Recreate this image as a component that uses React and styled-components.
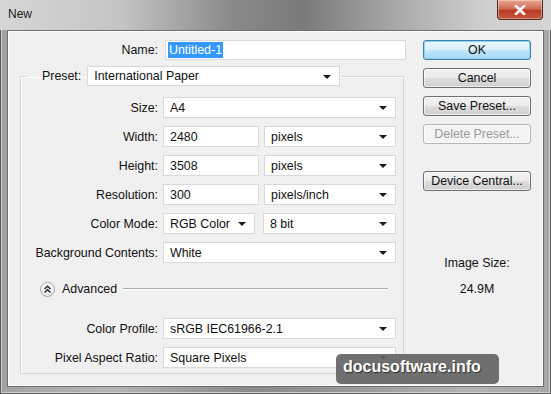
import React from "react";
import styled, { createGlobalStyle } from "styled-components";

const GlobalStyle = createGlobalStyle`
  html, body {
    margin: 0;
    padding: 0;
    overflow: hidden;
    background: #8f8f8f;
  }
`;

const Window = styled.div`
  position: relative;
  width: 551px;
  height: 394px;
  box-sizing: border-box;
  display: flex;
  flex-direction: column;
  padding: 0 7px 7px 7px;
  font-family: "Liberation Sans", Arial, sans-serif;
  font-size: 12.4px;
  color: #111;
  background: linear-gradient(
    90deg,
    #a2a2a2 0%,
    #b6b6b6 20%,
    #8a8a8a 45%,
    #979797 62%,
    #b3b3b3 85%,
    #a6a6a6 100%
  );
  box-shadow: inset 0 0 0 1px #5c5c5c, inset 0 0 0 2px #cfcfcf;
`;

const TitleBar = styled.div`
  height: 30px;
  display: flex;
  align-items: center;
  justify-content: space-between;
  margin: 0 -7px;
  padding: 0 8px 0 8px;
  background: linear-gradient(
    90deg,
    #d6d6d6 0%,
    #c4c4c4 22%,
    #8a8a8a 42%,
    #7a7a7a 55%,
    #a9a9a9 72%,
    #cfcfcf 88%,
    #d4d4d4 100%
  );
  box-sizing: border-box;
`;

const Title = styled.span`
  font-size: 12px;
  color: #1a1a1a;
  margin-top: -3px;
`;

const CloseButton = styled.div`
  align-self: flex-start;
  width: 46px;
  height: 20px;
  box-sizing: border-box;
  border: 1px solid #5a2a22;
  border-top: none;
  border-radius: 0 0 4px 4px;
  background: linear-gradient(180deg, #e8a493 0%, #d06e55 45%, #b93b22 55%, #c9573c 100%);
  box-shadow: inset 0 0 0 1px rgba(255, 255, 255, 0.35);
  display: flex;
  align-items: center;
  justify-content: center;
`;

const Panel = styled.div`
  flex: 1;
  display: flex;
  background: #f0f0f0;
  border: 1px solid #6d6d6d;
  box-shadow: inset 0 0 0 1px #fdfdfd;
  padding: 9px 11px 0 12px;
`;

const LeftColumn = styled.div`
  width: 386px;
  display: flex;
  flex-direction: column;
`;

const RightColumn = styled.div`
  width: 108px;
  margin-left: 17px;
  display: flex;
  flex-direction: column;
  align-items: stretch;
`;

const Row = styled.div`
  display: flex;
  align-items: center;
  height: ${(p) => p.$h || 21}px;
  gap: ${(p) => p.$gap || 5}px;
`;

const Label = styled.label`
  width: ${(p) => p.$w}px;
  text-align: right;
  white-space: nowrap;
  flex-shrink: 0;
`;

const TextBox = styled.div`
  width: ${(p) => p.$w}px;
  margin-left: ${(p) => p.$ml || 0}px;
  height: 100%;
  box-sizing: border-box;
  background: #fff;
  border: 1px solid #d9d9d9;
  display: flex;
  align-items: center;
  padding-left: ${(p) => p.$pad || 6}px;
  white-space: nowrap;
`;

const Selected = styled.span`
  background: #3399ff;
  color: #fff;
  padding: 1px 1px;
`;

const SelectBox = styled(TextBox)`
  justify-content: space-between;
  padding-right: 8px;
`;

const Arrow = styled.span`
  width: 0;
  height: 0;
  border-left: 4px solid transparent;
  border-right: 4px solid transparent;
  border-top: 4px solid #1b1b1b;
  margin-top: 1px;
`;

const GroupBox = styled.fieldset`
  margin: 6px 0 0 0;
  width: 384px;
  box-sizing: border-box;
  border: 1px solid #d5d5d5;
  box-shadow: inset 1px 1px 0 #fff;
  padding: 0 6px 5px 0;
  min-inline-size: 0;
`;

const Legend = styled.legend`
  margin-left: 6px;
  padding: 0 2px 0 15px;
  height: 20px;
  display: flex;
  align-items: center;
  gap: 6px;
`;

const Rows = styled.div`
  display: flex;
  flex-direction: column;
  gap: 8px;
  padding-top: ${(p) => p.$top || 0}px;
`;

const AdvancedRow = styled.div`
  display: flex;
  align-items: center;
  height: 16px;
  margin: 18px 0 21px 0;
  padding-left: 19px;
`;

const AdvancedIcon = styled.div`
  width: 15px;
  height: 15px;
  box-sizing: border-box;
  border-radius: 50%;
  border: 1px solid #a3a3a3;
  background: linear-gradient(180deg, #ffffff 0%, #e4e4e4 100%);
  display: flex;
  align-items: center;
  justify-content: center;
`;

const AdvancedText = styled.span`
  margin-left: 7px;
`;

const Rule = styled.div`
  flex: 1;
  height: 0;
  margin: 0 9px 0 6px;
  border-top: 1px solid #a9a9a9;
  border-bottom: 1px solid #fff;
`;

const Button = styled.div`
  height: 20px;
  box-sizing: border-box;
  border-radius: 3px;
  display: flex;
  align-items: center;
  justify-content: center;
  margin-top: ${(p) => p.$mt || 0}px;
  border: 1px solid ${(p) => (p.$primary ? "#3c7fb1" : p.$disabled ? "#b5b5b5" : "#707070")};
  color: ${(p) => (p.$disabled ? "#9a9a9a" : "#111")};
  background: ${(p) =>
    p.$primary
      ? "linear-gradient(180deg, #eaf6fd 0%, #d9f0fc 48%, #bee6fd 52%, #a7d9f5 100%)"
      : p.$disabled
      ? "#f4f4f4"
      : "linear-gradient(180deg, #f2f2f2 0%, #ebebeb 48%, #dddddd 52%, #cfcfcf 100%)"};
  box-shadow: inset 0 0 0 1px ${(p) => (p.$primary ? "#8fd2f6" : "rgba(255,255,255,0.6)")};
`;

const InfoText = styled.div`
  text-align: center;
  line-height: 14px;
  margin-top: ${(p) => p.$mt || 0}px;
`;

const Watermark = styled.div`
  position: absolute;
  left: 336px;
  top: 354px;
  width: 163px;
  height: 30px;
  box-sizing: border-box;
  border-radius: 5px;
  background: rgba(100, 100, 100, 0.92);
  color: #fff;
  font-family: "Liberation Sans", Arial, sans-serif;
  font-weight: bold;
  font-size: 16px;
  padding: 4px 0 0 7px;
  text-shadow: 1px 1px 1px #333;
`;

function Select({ w, value, ml }) {
  return (
    <SelectBox $w={w} $ml={ml}>
      <span>{value}</span>
      <Arrow />
    </SelectBox>
  );
}

function Field({ label, children }) {
  return (
    <Row>
      <Label $w={137}>{label}</Label>
      {children}
    </Row>
  );
}

export default function App() {
  return (
    <>
      <GlobalStyle />
      <Window>
        <TitleBar>
          <Title>New</Title>
          <CloseButton>
            <svg width="12" height="10" viewBox="0 0 12 10">
              <path d="M2 1 L10 9 M10 1 L2 9" stroke="#fff" strokeWidth="2.6" strokeLinecap="square" />
            </svg>
          </CloseButton>
        </TitleBar>
        <Panel>
          <LeftColumn>
            <Row $h={20} $gap={7}>
              <Label $w={138}>Name:</Label>
              <TextBox $w={241} $pad={2}>
                <Selected>Untitled-1</Selected>
              </TextBox>
            </Row>
            <GroupBox>
              <Legend>
                <span>Preset:</span>
                <Select w={253} value="International Paper" />
              </Legend>
              <Rows $top={11}>
                <Field label="Size:">
                  <Select w={233} value="A4" />
                </Field>
                <Field label="Width:">
                  <TextBox $w={96}>2480</TextBox>
                  <Select w={132} value="pixels" />
                </Field>
                <Field label="Height:">
                  <TextBox $w={96}>3508</TextBox>
                  <Select w={132} value="pixels" />
                </Field>
                <Field label="Resolution:">
                  <TextBox $w={96}>300</TextBox>
                  <Select w={132} value="pixels/inch" />
                </Field>
                <Field label="Color Mode:">
                  <Select w={92} value="RGB Color" />
                  <Select w={133} ml={3} value="8 bit" />
                </Field>
                <Field label="Background Contents:">
                  <Select w={233} value="White" />
                </Field>
              </Rows>
              <AdvancedRow>
                <AdvancedIcon>
                  <svg width="9" height="9" viewBox="0 0 9 9">
                    <path d="M1.5 4 L4.5 1.2 L7.5 4 M1.5 7.5 L4.5 4.7 L7.5 7.5" fill="none" stroke="#222" strokeWidth="1.4" />
                  </svg>
                </AdvancedIcon>
                <AdvancedText>Advanced</AdvancedText>
                <Rule />
              </AdvancedRow>
              <Rows>
                <Field label="Color Profile:">
                  <Select w={233} value="sRGB IEC61966-2.1" />
                </Field>
                <Field label="Pixel Aspect Ratio:">
                  <Select w={233} value="Square Pixels" />
                </Field>
              </Rows>
            </GroupBox>
          </LeftColumn>
          <RightColumn>
            <Button $primary>OK</Button>
            <Button $mt={8}>Cancel</Button>
            <Button $mt={8}>Save Preset...</Button>
            <Button $mt={8} $disabled>Delete Preset...</Button>
            <Button $mt={27}>Device Central...</Button>
            <InfoText $mt={65}>Image Size:</InfoText>
            <InfoText $mt={12}>24.9M</InfoText>
          </RightColumn>
        </Panel>
        <Watermark>docusoftware.info</Watermark>
      </Window>
    </>
  );
}
